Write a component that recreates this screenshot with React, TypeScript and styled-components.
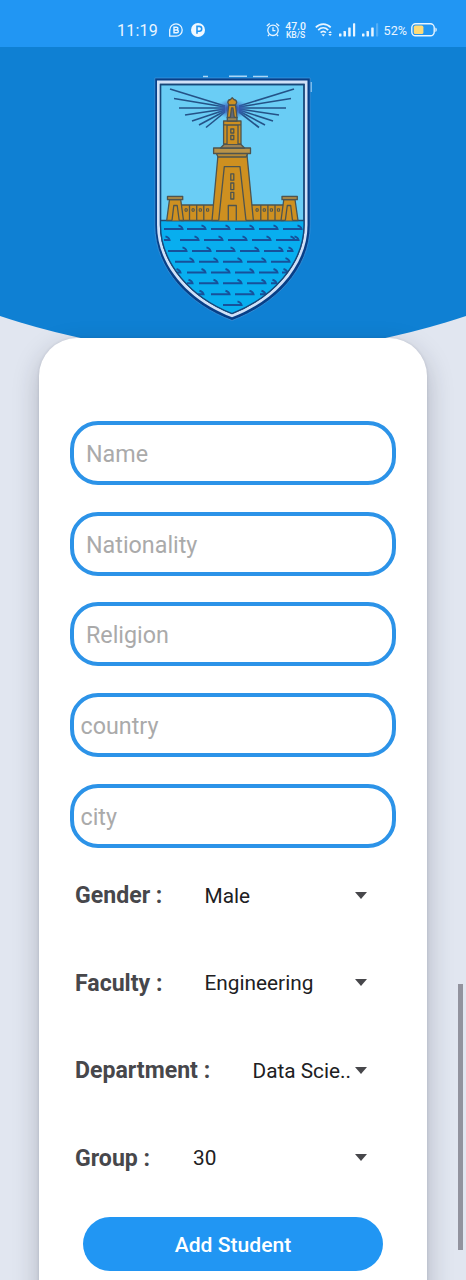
import React from "react";
import styled, { createGlobalStyle } from "styled-components";

const GlobalStyle = createGlobalStyle`
  * { box-sizing: border-box; }
  html, body { margin: 0; padding: 0; overflow: hidden; }
  body { font-family: Roboto, "Liberation Sans", sans-serif; background: #e1e6f0; }
`;

const Screen = styled.div`
  position: relative;
  width: 466px;
  height: 1280px;
  overflow: hidden;
  background: #e1e6f0;
  display: flex;
  flex-direction: column;
`;

const StatusBar = styled.div`
  flex: none;
  height: 47px;
  padding: 13px 29px 0 117px;
  display: flex;
  justify-content: space-between;
  background: #2196f3;
  color: #e9f5ff;
`;

const StatusGroup = styled.div<{ $gap: number }>`
  height: 34px;
  display: flex;
  align-items: center;
  gap: ${(p) => p.$gap}px;
`;

const Clock = styled.span`
  font-size: 16px;
  letter-spacing: 0.2px;
  margin-right: 4.5px;
`;

const Speed = styled.span`
  width: 22px;
  margin-right: 3px;
  display: flex;
  flex-direction: column;
  align-items: center;
  font-weight: 500;
  font-size: 10.5px;
  line-height: 9px;
  white-space: nowrap;
`;

const SpeedUnit = styled.span`
  font-size: 8.6px;
  line-height: 8px;
`;

const Percent = styled.span`
  margin-right: -1px;
  font-size: 12.6px;
`;

const Header = styled.header`
  flex: none;
  height: 307px;
  padding: 18px 0 0 145px;
  background: #0f80d3;
  clip-path: circle(735px at 50% -428px);
`;

const Card = styled.main`
  position: relative;
  flex: none;
  width: 388px;
  height: 1000px;
  margin: -16px 0 0 39px;
  padding: 83px 31px 0;
  border-radius: 38px;
  background: #fff;
  box-shadow: 0 10px 26px rgba(30, 30, 50, 0.25), 0 0 3px rgba(30, 30, 50, 0.12);
`;

const Fields = styled.div`
  display: flex;
  flex-direction: column;
  gap: 26.7px;
`;

const Field = styled.input<{ $inset: number }>`
  display: block;
  width: 326px;
  height: 64px;
  padding: 2px 12px 0 ${(p) => p.$inset}px;
  border: 4px solid #2c93e8;
  border-radius: 28px;
  background: transparent;
  outline: none;
  font-family: inherit;
  font-size: 23.3px;
  color: #222;
  &::placeholder { color: #aaa; opacity: 1; }
`;

const Choices = styled.div`
  margin-top: 4px;
  padding: 0 29.5px 0 5px;
`;

const Choice = styled.div`
  height: 87.6px;
  display: flex;
  align-items: center;
`;

const Label = styled.span<{ $width: number }>`
  flex: none;
  width: ${(p) => p.$width}px;
  font-size: 23.1px;
  font-weight: 700;
  color: #47474b;
`;

const Value = styled.span`
  flex: 1;
  font-size: 20.8px;
  color: #202022;
  white-space: nowrap;
`;

const Caret = styled.span`
  flex: none;
  margin-top: -1px;
  border: 6.5px solid transparent;
  border-top: 7px solid #47474b;
  border-bottom-width: 0;
`;

const Submit = styled.button`
  display: block;
  width: 300px;
  height: 54px;
  margin: 15px 0 0 13px;
  padding: 1px 0 0;
  border: 0;
  border-radius: 27px;
  background: #2196f3;
  color: #fff;
  font-family: inherit;
  font-size: 21.1px;
  font-weight: 500;
`;

const ScrollThumb = styled.div`
  position: absolute;
  right: 3px;
  top: 984px;
  width: 5px;
  height: 266px;
  background: #92939e;
`;

const waves: [number, number[]][] = [
  [164, [19, 42, 66, 90, 114, 138]],
  [175, [35, 59, 83, 107, 131]],
  [186, [23, 47, 71, 95, 119]],
  [196.7, [30, 54, 78, 102, 126]],
  [207.6, [42, 66, 90, 114]],
  [218.3, [54, 78, 102]],
  [229.3, [66, 90]],
  [240, [78]],
];

const rippleEnds: [number, number][] = [
  [22, 175], [151, 175], [145, 186], [33, 207.6], [140, 207.6],
  [45, 218.3], [129, 218.3], [56, 229.3], [118, 229.3],
];

const rays = [
  "M80 41 25 24", "M80 42 29 33.5", "M80 43H34", "M80 44 40 50",
  "M80 45 47 56", "M80 46 54 60", "M80 47 61 62.5",
  "M94 41 149 24", "M94 42 146 33.5", "M94 43H141", "M94 44 134 50",
  "M94 45 128 56", "M94 46 120 60", "M94 47 114 62.5",
];

const Crest = () => (
  <svg width="180" height="260" viewBox="0 0 180 260" fill="none">
    <defs>
      <clipPath id="shield">
        <path d="M15.5 19.5H159V160C159 199 127 233 87 248.5C47 233 15.5 199 15.5 160Z" />
      </clipPath>
      <radialGradient id="glow">
        <stop offset="0.35" stopColor="#3653b0" stopOpacity="0.9" />
        <stop offset="1" stopColor="#3e7fd0" stopOpacity="0" />
      </radialGradient>
    </defs>
    <path d="M58 11.5h5M84 11.3h18M108 11.5h15M166 17v10" stroke="#a9d5f6" strokeWidth="1.4" />
    <path d="M9.8 13H165.2V160C165.2 205 129 240 87 255.5C45 240 9.8 205 9.8 160Z" fill="#073f88" stroke="#3b93da" strokeWidth="0.8" />
    <path d="M12 15.5H162.5V160C162.5 202 128 237 87 252.2C46 237 12 202 12 160Z" fill="#d0e1f8" />
    <path d="M15.5 19.5H159V160C159 199 127 233 87 248.5C47 233 15.5 199 15.5 160Z" fill="#6acdf5" stroke="#174779" strokeWidth="1.4" />
    <g clipPath="url(#shield)">
      <path d="M15 155.5H160V252H15Z" fill="#08aeef" />
      <path d="M15 155.5H160" stroke="#244d71" strokeWidth="1.3" />
      <g stroke="#16519b" strokeWidth="2">
        {waves.map(([y, xs]) =>
          xs.map((x) => <path key={`${x}-${y}`} d={`M${x} ${y}h18.5q-.5-2.6-4-3.6`} />)
        )}
        {rippleEnds.map(([x, y]) => (
          <path key={`${x}-${y}`} d={`M${x - 3} ${y}h5.5q-.5-2.6-4-3.6`} />
        ))}
      </g>
    </g>
    <path d="M15.5 19.5H159V160C159 199 127 233 87 248.5C47 233 15.5 199 15.5 160Z" stroke="#174779" strokeWidth="1.3" />
    <g stroke="#245287" strokeWidth="1.6">{rays.map((d) => <path key={d} d={d} />)}</g>
    <ellipse cx="87.2" cy="44" rx="17" ry="10" fill="url(#glow)" />
    <g fill="#ce9020" stroke="#4e544f" strokeWidth="1.3" strokeLinejoin="round">
      <path d="M36 140H138.5V155.5H36Z" />
      <path d="M44.5 140V155.5M51.7 140V155.5M58.8 140V155.5M115.8 140V155.5M122.9 140V155.5M130 140V155.5" />
      <path d="M40 143.8h2.2v2.4H40zM47 143.8h2.2v2.4H47zM54.2 143.8h2.2v2.4h-2.2zM61.5 143.8h2.2v2.4h-2.2zM111 143.8h2.2v2.4H111zM118.2 143.8h2.2v2.4h-2.2zM125.3 143.8h2.2v2.4h-2.2zM132.4 143.8h2.2v2.4h-2.2z" strokeWidth="1" />
      <path d="M24.5 134.5H35.7L38.5 155.5H21.7ZM138.8 134.5H150L153 155.5H136Z" />
      <path d="M22.5 131.3H37.7V134.7H22.5ZM137 131.3H152.3V134.7H137Z" fill="#a68546" />
      <path d="M27 155.5 28.8 140.5h3.4l2 15M140.3 155.5l2-15h3.4l1.8 15" />
      <path d="M73 90H102L108.4 155.5H67Z" />
      <path d="M73.7 155.5 79.3 101.6H95L101 155.5M83.3 155.5V140.5H91.3V155.5" />
      <path d="M85.8 108.8h3v6.4h-3zM85.8 118h3v6.6h-3zM85.8 127.4h3v6.6h-3z" />
      <path d="M71 87.5H103L101.2 92H73Z" fill="#b78a37" />
      <path d="M68.6 83H105.5V88.5H68.6Z" fill="#b99349" />
      <path d="M75.5 83 79.5 79H95.5L99.5 83Z" fill="#9c8256" />
      <path d="M78.6 56H96V79H78.6Z" />
      <path d="M78.6 59.8H96M82 79V60H93V79" />
      <path d="M85.8 64h3v4h-3zM85.8 70.5h3v4h-3z" />
      <path d="M82.3 52.3H92V56H82.3Z" fill="#9b8557" />
      <path d="M83.8 40H90.5L92 52.5H82.3Z" />
      <path d="M85.3 52.5 86.5 43H88L89.3 52.5" fill="#60687b" />
      <path d="M82.8 37.5Q83 34.8 85.5 34.5L87.2 32.8l1.8 1.7Q91.5 35 91.7 37.5L90.5 40H84Z" />
    </g>
  </svg>
);

const AppIcons = () => (
  <svg width="38" height="18" viewBox="0 0 38 18" fill="none">
    <path d="M1.8 9A6.2 6.2 0 1 1 8 15.2H1.7V9Z" stroke="currentColor" strokeWidth="1.3" />
    <path d="M6 6.2h2.5a1.4 1.4 0 0 1 0 2.8H6Zm0 2.8h2.9a1.4 1.4 0 0 1 0 2.8H6Z" stroke="currentColor" strokeWidth="1.45" />
    <circle cx="30" cy="9" r="7" fill="#f0f8ff" />
    <path d="M29 12.8V5.4h2.3a2.3 2.3 0 0 1 0 4.8H29.3" stroke="#2196f3" strokeWidth="1.6" />
  </svg>
);

const Alarm = () => (
  <svg width="14" height="16" viewBox="0 0 14 16" fill="none" stroke="currentColor" strokeWidth="1.3">
    <circle cx="7" cy="8.3" r="5.2" />
    <path d="M7 5.2v3.4h2.4M.8 4 3.7 1.6M13.2 4l-2.9-2.4M3.1 12.6l-1.2 1.5M10.9 12.6l1.2 1.5" />
  </svg>
);

const Wifi = () => (
  <svg width="18" height="14" viewBox="0 0 18 14" fill="none" stroke="currentColor" strokeWidth="1.7">
    <path d="M.8 4.4C5-.1 11.5-.1 15.7 4.4M3.2 7.1c3-3 7-3 10 0M5.6 9.7c1.7-1.7 3.7-1.7 5.3 0" />
    <path d="M6.4 11.2h3.8l-1.9 2.3Z" fill="currentColor" stroke="none" />
    <path d="m13.3 10 1.8-2 1.8 2ZM13.3 11l1.8 2 1.8-2Z" fill="currentColor" stroke="none" />
  </svg>
);

const Signal = ({ faded }: { faded?: boolean }) => (
  <svg width="18" height="14" viewBox="0 0 18 14" fill="currentColor">
    <rect x="1" y="10.5" width="2.5" height="3" rx=".4" />
    <rect x="5.5" y="8" width="2.5" height="5.5" rx=".4" />
    <rect x="10.2" y="4.5" width="2.5" height="9" rx=".4" />
    <rect x="15" y=".3" width="2.2" height="13.2" rx=".4" opacity={faded ? 0.25 : 1} />
  </svg>
);

const Battery = () => (
  <svg width="26" height="14" viewBox="0 0 26 14" fill="none">
    <rect x=".8" y=".8" width="22.4" height="12" rx="3.8" stroke="currentColor" strokeWidth="1.4" />
    <rect x="2.8" y="2.6" width="9.6" height="8.5" rx="1.6" fill="#ffdb76" />
    <path d="M24.4 4.5q1.4.2 1.4 2.2t-1.4 2.2Z" fill="currentColor" />
  </svg>
);

const fields = [
  { name: "Name", inset: 12 },
  { name: "Nationality", inset: 12 },
  { name: "Religion", inset: 12 },
  { name: "country", inset: 6.5 },
  { name: "city", inset: 6.5 },
];

const choices = [
  { label: "Gender :", value: "Male", width: 129.5 },
  { label: "Faculty :", value: "Engineering", width: 129.5 },
  { label: "Department :", value: "Data Scie..", width: 177.5 },
  { label: "Group :", value: "30", width: 118 },
];

export default function App() {
  return (
    <Screen>
      <GlobalStyle />
      <StatusBar>
        <StatusGroup $gap={6}>
          <Clock>11:19</Clock>
          <AppIcons />
        </StatusGroup>
        <StatusGroup $gap={5}>
          <Alarm />
          <Speed>
            47.0
            <SpeedUnit>KB/S</SpeedUnit>
          </Speed>
          <Wifi />
          <Signal />
          <Signal faded />
          <Percent>52%</Percent>
          <Battery />
        </StatusGroup>
      </StatusBar>
      <Header>
        <Crest />
      </Header>
      <Card>
        <Fields>
          {fields.map((f) => (
            <Field key={f.name} placeholder={f.name} $inset={f.inset} />
          ))}
        </Fields>
        <Choices>
          {choices.map((c) => (
            <Choice key={c.label}>
              <Label $width={c.width}>{c.label}</Label>
              <Value>{c.value}</Value>
              <Caret />
            </Choice>
          ))}
        </Choices>
        <Submit>Add Student</Submit>
      </Card>
      <ScrollThumb />
    </Screen>
  );
}
